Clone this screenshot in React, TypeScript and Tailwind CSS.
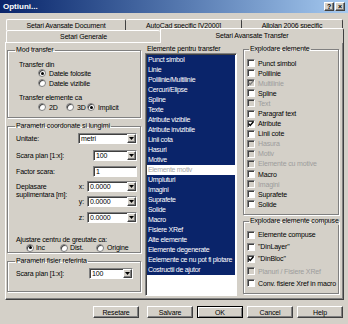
import React from 'react';

const raised = 'border border-t-white border-l-white border-r-[#404040] border-b-[#404040] shadow-[inset_-1px_-1px_0_#808080]';
const sunken = 'border border-t-[#808080] border-l-[#808080] border-r-white border-b-white shadow-[inset_1px_1px_0_#404040]';
const etched = 'border border-[#808080] shadow-[inset_1px_1px_0_#fff,1px_1px_0_#fff] min-w-0';
const legend = 'px-[1px] h-[8px] leading-[8px] whitespace-nowrap';

function Radio({ on }: { on?: boolean }) {
  return (
    <span className="w-[8px] h-[8px] shrink-0 rounded-full bg-white border border-[#808080] shadow-[inset_1px_1px_0_#404040] flex items-center justify-center">
      {on && <span className="w-[3px] h-[3px] rounded-full bg-black" />}
    </span>
  );
}

function Check({ on, off }: { on?: boolean; off?: boolean }) {
  return (
    <span className={`w-[8px] h-[8px] shrink-0 ${sunken} ${off ? 'bg-[#d4d0c8]' : 'bg-white'} flex items-center justify-center`}>
      {on && (
        <svg width="6" height="6" viewBox="0 0 6 6">
          <path d="M0.6 2.6 L2.2 4.4 L5.4 0.8" fill="none" stroke={off ? '#808080' : '#000'} strokeWidth="1.4" />
        </svg>
      )}
    </span>
  );
}

function Combo({ value, w }: { value: string; w: string }) {
  return (
    <div className={`${w} h-[11px] ${sunken} bg-white flex`}>
      <span className="flex-1 pl-[2px] flex items-center">{value}</span>
      <span className={`w-[9px] ${raised} bg-[#d4d0c8] flex items-center justify-center`}>
        <svg width="5" height="3" viewBox="0 0 5 3"><path d="M0 0 H5 L2.5 3 Z" fill="#000" /></svg>
      </span>
    </div>
  );
}

function Btn({ label, def }: { label: string; def?: boolean }) {
  return (
    <div
      className={`w-[46px] h-[12px] bg-[#d4d0c8] flex items-center justify-center ${
        def ? 'border border-black shadow-[inset_1px_1px_0_#fff,inset_-1px_-1px_0_#808080]' : raised
      }`}
    >
      {label}
    </div>
  );
}

const listItems = [
  'Punct simbol', 'Linie', 'Polilinie/Multilinie', 'Cercuri/Elipse', 'Spline', 'Texte', 'Atribute vizibile',
  'Atribute invizibile', 'Linii cota', 'Hasuri', 'Motive', 'Elemente motiv', 'Umpluturi', 'Imagini', 'Suprafete',
  'Solide', 'Macro', 'Fisiere XRef', 'Alte elemente', 'Elemente degenerate', 'Eelemente ce nu pot fi plotare',
  'Costructii de ajutor',
];

const explode: [string, boolean, boolean][] = [
  ['Punct simbol', false, false], ['Polilinie', false, false], ['Multilinie', true, true], ['Spline', false, false],
  ['Text', false, true], ['Paragraf text', false, false], ['Atribute', true, false], ['Linii cote', false, false],
  ['Hasura', false, true], ['Motiv', false, true], ['Elemente cu motive', false, true], ['Macro', false, false],
  ['Imagini', false, true], ['Suprafete', false, false], ['Solide', false, false],
];

const compuse: [string, boolean, boolean][] = [
  ['Elemente compuse', false, false], ['"DinLayer"', false, false], ['"DinBloc"', true, false],
  ['Planuri / Fisiere XRef', false, true], ['Conv. fisiere Xref in macro', false, false],
];

export default function App() {
  return (
    <div className="w-[348px] h-[324px] overflow-hidden bg-[#d4d0c8] text-black text-[7px] leading-none tracking-[-0.15px] font-['Liberation_Sans',Arial,sans-serif] flex flex-col">
      {/* title bar */}
      <div className="h-[13px] shrink-0 bg-linear-to-r from-[#0a246a] to-[#a6caf0] flex items-center justify-between pl-[3px] pr-[3px]">
        <span className="text-white font-bold text-[8px] tracking-normal">Optiuni...</span>
        <div className="flex gap-[1px]">
          <span className={`w-[10px] h-[9px] ${raised} bg-[#d4d0c8] flex items-center justify-center font-bold text-[7px]`}>?</span>
          <span className={`w-[10px] h-[9px] ${raised} bg-[#d4d0c8] flex items-center justify-center font-bold text-[7px]`}>×</span>
        </div>
      </div>

      <div className="pt-[6px] pl-[5px] pr-[4px] flex flex-col">
        {/* tabs, back row */}
        <div className="h-[11px] flex pl-[1px]">
          <div className="w-[120px] border-t border-l border-t-white border-l-white border-r border-r-[#404040] rounded-t-[2px] flex items-center justify-center">Setari Avansate Document</div>
          <div className="w-[116px] border-t border-t-white border-r border-r-[#404040] rounded-t-[2px] flex items-center justify-center">AutoCad specific [V2000]</div>
          <div className="w-[101px] border-t border-t-white border-r border-r-[#404040] rounded-t-[2px] flex items-center justify-center">Allplan 2006 specific</div>
        </div>
        {/* tabs, front row */}
        <div className="h-[12px] flex items-end pl-[1px]">
          <div className="w-[154px] h-[12px] border-t border-l border-t-white border-l-white rounded-t-[2px] flex items-center justify-center">Setari Generale</div>
          <div className="w-[184px] h-[15px] mb-[-1px] relative z-10 bg-[#d4d0c8] border-t border-l border-r border-t-white border-l-white border-r-[#404040] rounded-t-[2px] flex items-center justify-center pb-[2px]">Setari Avansate Transfer</div>
        </div>

        {/* panel */}
        <div className={`h-[258px] ${raised} flex pl-[1px]`}>
          {/* left column */}
          <div className="w-[134px] pt-[3px] flex flex-col">
            <fieldset className={`${etched} pl-[7px] pr-[3px] pt-[5px] pb-[5px]`}>
              <legend className={legend}>Mod transfer</legend>
              <div className="h-[10px] flex items-center ml-[4px]">Transfer din</div>
              <div className="h-[10px] mt-[-1px] flex items-center gap-[3px] ml-[23px]"><Radio on />Datele folosite</div>
              <div className="h-[10px] flex items-center gap-[3px] ml-[23px]"><Radio />Datele vizibile</div>
              <div className="h-[10px] mt-[4px] flex items-center ml-[4px]">Transfer elemente ca</div>
              <div className="h-[10px] flex items-center ml-[23px]">
                <span className="w-[28px] flex items-center gap-[3px]"><Radio />2D</span>
                <span className="w-[21px] flex items-center gap-[3px]"><Radio />3D</span>
                <span className="flex items-center gap-[3px]"><Radio on />Implicit</span>
              </div>
            </fieldset>

            <fieldset className={`${etched} mt-[4px] pl-[7px] pr-[3px] pt-[3px]`}>
              <legend className={legend}>Parametri coordonate si lungimi</legend>
              <div className="h-[11px] flex items-center justify-between">
                <span className="ml-[1px]">Unitate:</span>
                <Combo value="metri" w="w-[59px]" />
              </div>
              <div className="h-[11px] mt-[6px] flex items-center justify-between">
                <span className="ml-[1px]">Scara plan [1:x]:</span>
                <Combo value="100" w="w-[44px]" />
              </div>
              <div className="h-[11px] mt-[5px] flex items-center justify-between">
                <span className="ml-[1px]">Factor scara:</span>
                <div className={`w-[44px] h-[11px] ${sunken} bg-white pl-[2px] flex items-center`}>1</div>
              </div>
              <div className="mt-[4px] flex justify-between">
                <span className="ml-[1px] mt-[2px] leading-[8px]">Deplasare<br />suplimentara [m]:</span>
                <div className="flex flex-col gap-[4px]">
                  <div className="h-[11px] flex items-center gap-[3px]"><span>x:</span><Combo value="0.0000" w="w-[50px]" /></div>
                  <div className="h-[11px] flex items-center gap-[3px]"><span>y:</span><Combo value="0.0000" w="w-[50px]" /></div>
                  <div className="h-[11px] mt-[1px] flex items-center gap-[3px]"><span>z:</span><Combo value="0.0000" w="w-[50px]" /></div>
                </div>
              </div>
              <div className="h-[8px] mt-[12px] ml-[1px] flex items-center">Ajustare centru de greutate ca:</div>
              <div className="h-[9px] flex items-center ml-[11px]">
                <span className="w-[34px] flex items-center gap-[2px]"><Radio on />Inc</span>
                <span className="w-[36px] flex items-center gap-[2px]"><Radio />Dist.</span>
                <span className="flex items-center gap-[3px]"><Radio />Origine</span>
              </div>
            </fieldset>

            <fieldset className={`${etched} mt-[4px] pl-[7px] pr-[3px] pt-[2px] pb-[12px]`}>
              <legend className={legend}>Parametri fisier referinta</legend>
              <div className="h-[12px] flex items-center justify-between">
                <span className="ml-[1px]">Scara plan [1:x]:</span>
                <div className="mr-[4px]"><Combo value="100" w="w-[44px]" /></div>
              </div>
            </fieldset>
          </div>

          {/* middle column */}
          <div className="w-[92px] ml-[4px] pt-[2px] flex flex-col">
            <div className="h-[8px] leading-[8px] pl-[2px] whitespace-nowrap">Elemente pentru transfer</div>
            <div className={`h-[243px] ${sunken} shadow-[inset_1px_1px_0_#404040,inset_-1px_-1px_0_#d4d0c8] bg-white p-[1px] tracking-[-0.3px]`}>
              {listItems.map((it, i) =>
                i === 11 ? (
                  <div key={it} className="h-[10px] leading-[10px] pl-[1px] text-[#a8a8a8] bg-white whitespace-nowrap">{it}</div>
                ) : (
                  <div key={it} className="h-[10px] leading-[10px] pl-[1px] text-white bg-[#0a246a] whitespace-nowrap overflow-hidden">{it}</div>
                )
              )}
            </div>
          </div>

          {/* right column */}
          <div className="w-[96px] ml-[6px] pt-[2px] flex flex-col">
            <fieldset className={`${etched} pl-[3px] pt-[5px] pb-[5px]`}>
              <legend className={`ml-[2px] ${legend}`}>Explodare elemente</legend>
              {explode.map(([t, on, off]) => (
                <div key={t} className={`h-[10.1px] flex items-center gap-[3px] whitespace-nowrap ${off ? 'text-[#9c9c9c]' : ''}`}>
                  <Check on={on} off={off} />{t}
                </div>
              ))}
            </fieldset>
            <fieldset className={`${etched} mt-[2px] pl-[3px] pt-[3px] pb-[4px]`}>
              <legend className={`ml-[2px] ${legend}`}>Explodare elemente compuse</legend>
              {compuse.map(([t, on, off]) => (
                <div key={t} className={`h-[12.2px] flex items-center gap-[3px] whitespace-nowrap ${off ? 'text-[#9c9c9c]' : ''}`}>
                  <Check on={on} off={off} />{t}
                </div>
              ))}
            </fieldset>
          </div>
        </div>

        {/* buttons */}
        <div className="h-[12px] mt-[6px] flex">
          <div className="ml-[88px]"><Btn label="Resetare" /></div>
          <div className="ml-[8px]"><Btn label="Salvare" /></div>
          <div className="ml-[4px]"><Btn label="OK" def /></div>
          <div className="ml-[4px]"><Btn label="Cancel" /></div>
          <div className="ml-[4px]"><Btn label="Help" /></div>
        </div>
      </div>
    </div>
  );
}
